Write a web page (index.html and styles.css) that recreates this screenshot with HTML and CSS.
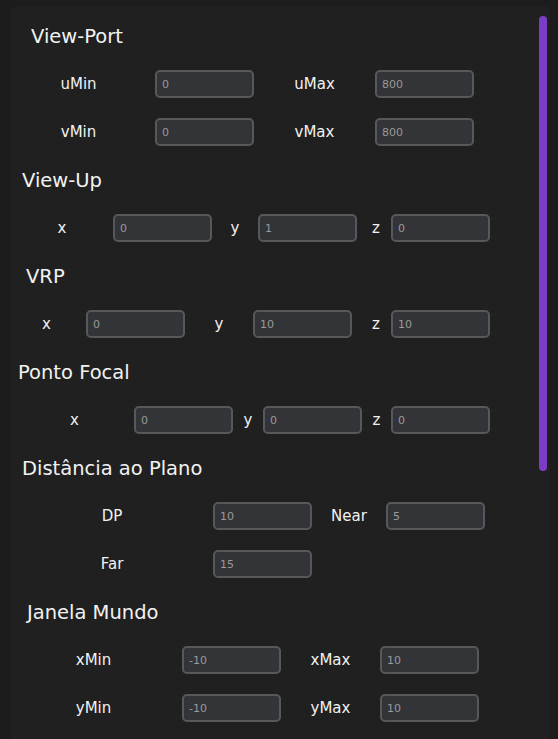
FILE: index.html
```html
<!DOCTYPE html>
<html>
<head>
<meta charset="utf-8">
<link rel="stylesheet" href="styles.css">
</head>
<body>
<div class="panel">
  <div class="scrollbar"></div>
  <div class="content">
    <div class="heading h-vp">View-Port</div>
    <div class="row r-vp">
      <span class="lbl l-vp1">uMin</span><input class="fld" value="0" readonly>
      <span class="lbl">uMax</span><input class="fld" value="800" readonly>
    </div>
    <div class="row r-vp">
      <span class="lbl l-vp1">vMin</span><input class="fld" value="0" readonly>
      <span class="lbl">vMax</span><input class="fld" value="800" readonly>
    </div>

    <div class="heading h-up">View-Up</div>
    <div class="row r-up">
      <span class="lbl">x</span><input class="fld" value="0" readonly>
      <span class="lbl">y</span><input class="fld" value="1" readonly>
      <span class="lbl l-up3">z</span><input class="fld" value="0" readonly>
    </div>

    <div class="heading h-vrp">VRP</div>
    <div class="row r-vrp">
      <span class="lbl l-vrp1">x</span><input class="fld" value="0" readonly>
      <span class="lbl">y</span><input class="fld" value="10" readonly>
      <span class="lbl l-vrp3">z</span><input class="fld" value="10" readonly>
    </div>

    <div class="heading h-pf">Ponto Focal</div>
    <div class="row r-pf">
      <span class="lbl l-pf1">x</span><input class="fld" value="0" readonly>
      <span class="lbl">y</span><input class="fld" value="0" readonly>
      <span class="lbl">z</span><input class="fld" value="0" readonly>
    </div>

    <div class="heading h-dp">Distância ao Plano</div>
    <div class="row r-dp">
      <span class="lbl">DP</span><input class="fld" value="10" readonly>
      <span class="lbl">Near</span><input class="fld" value="5" readonly>
    </div>
    <div class="row r-dp">
      <span class="lbl">Far</span><input class="fld" value="15" readonly>
    </div>

    <div class="heading h-jm">Janela Mundo</div>
    <div class="row r-jm">
      <span class="lbl l-jm1">xMin</span><input class="fld" value="-10" readonly>
      <span class="lbl">xMax</span><input class="fld" value="10" readonly>
    </div>
    <div class="row r-jm">
      <span class="lbl l-jm1">yMin</span><input class="fld" value="-10" readonly>
      <span class="lbl">yMax</span><input class="fld" value="10" readonly>
    </div>
  </div>
</div>
</body>
</html>
```
FILE: styles.css
```css
html, body {
  margin: 0;
  padding: 0;
  background: #1c1c1c;
  height: 739px;
  overflow: hidden;
  font-family: "DejaVu Sans", "Liberation Sans", sans-serif;
}

.panel {
  position: relative;
  margin: 6px 0 0 11px;
  width: 539px;
  height: 760px;
  background: #202020;
  border-radius: 5px;
}

.scrollbar {
  position: absolute;
  left: 528px;
  top: 10px;
  width: 8px;
  height: 455px;
  background: #7b3dc6;
  border-radius: 4px;
}

.content {
  padding-top: 6px;
}

.heading {
  height: 48px;
  display: flex;
  align-items: center;
  color: #f2f2f2;
  font-size: 19.5px;
}

.h-vp { padding-left: 20px; }
.h-up { padding-left: 11px; }
.h-vrp { padding-left: 15px; }
.h-pf { padding-left: 7px; }
.h-dp { padding-left: 11px; }
.h-jm { padding-left: 16px; }

.row {
  height: 48px;
  display: grid;
  align-items: center;
}

.lbl {
  color: #f2f2f2;
  font-size: 15px;
  text-align: center;
}

.fld {
  box-sizing: border-box;
  width: 99px;
  height: 28px;
  margin: 0;
  padding: 0 0 0 5px;
  border: 2px solid #56595b;
  border-radius: 5px;
  background: #333437;
  color: #9a9a9a;
  font-family: "DejaVu Sans", "Liberation Sans", sans-serif;
  font-size: 11px;
  outline: none;
}

.r-vp { grid-template-columns: 144px 99px 121px 99px; }
.l-vp1 { padding-right: 9px; }

.r-up { grid-template-columns: 102px 99px 46px 99px 34px 99px; }
.l-up3 { padding-left: 4px; }

.r-vrp { grid-template-columns: 75px 99px 68px 99px 39px 99px; }
.l-vrp1 { padding-right: 4px; }
.l-vrp3 { padding-left: 9px; }

.r-pf { grid-template-columns: 123px 99px 30px 99px 29px 99px; }
.l-pf1 { padding-left: 4px; }

.r-dp { grid-template-columns: 202px 99px 74px 99px; }

.r-jm { grid-template-columns: 171px 99px 99px 99px; }
.l-jm1 { padding-right: 6px; }
```
